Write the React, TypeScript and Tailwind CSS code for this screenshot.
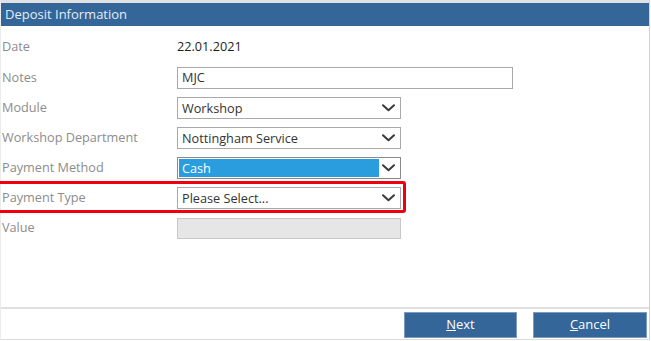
import React from "react";

const Chevron = () => (
  <svg width="13" height="8" viewBox="0 0 13 8" className="shrink-0">
    <path d="M1 1.2 L6.5 6.2 L12 1.2" fill="none" stroke="#3a3a3a" strokeWidth="2" strokeLinecap="round" strokeLinejoin="round" />
  </svg>
);

const Select = ({ value, focused }: { value: string; focused?: boolean }) => (
  <div
    className={`w-[224px] h-[22px] flex items-center bg-white border ${
      focused ? "border-[#8a8a8a]" : "border-[#a9a9a9]"
    }`}
  >
    {focused ? (
      <div className="flex-1 h-[18px] ml-[1px] bg-[#2a9ddf] text-white pl-[3px] flex items-center leading-none">
        {value}
      </div>
    ) : (
      <div className="flex-1 pl-[4px] text-[#333] leading-none">{value}</div>
    )}
    <div className="w-[21px] flex items-center justify-center pr-[2px]">
      <Chevron />
    </div>
  </div>
);

const Row = ({ label, h, children }: { label: string; h: string; children?: React.ReactNode }) => (
  <div className={`flex items-center ${h}`}>
    <div className="w-[176px] pl-[1px] text-[#8c8c8c]">{label}</div>
    {children}
  </div>
);

export default function App() {
  return (
    <div
      className="w-[651px] h-[341px] bg-white text-[12.7px]"
      style={{ fontFamily: "'Open Sans', 'Liberation Sans', sans-serif" }}
    >
      <div className="w-[650px] h-[340px] flex flex-col border-l border-r border-b border-l-[#ececec] border-r-[#d4d4d4] border-b-[#dcdcdc]">
        <div className="h-[3px] bg-[#e2e2e2] shrink-0" />
        <div className="h-[23px] bg-[#346699] shrink-0 flex items-center pl-[4px] text-[#e4ecf5] text-[13px]">
          Deposit Information
        </div>
        <div className="h-[281px] shrink-0 pt-[5px] relative">
          <Row label="Date" h="h-[31px]">
            <div className="text-[#1e1e1e]">22.01.2021</div>
          </Row>
          <Row label="Notes" h="h-[31px]">
            <div className="w-[336px] h-[22px] border border-[#a9a9a9] bg-white flex items-center pl-[4px] text-[#333]">
              MJC
            </div>
          </Row>
          <Row label="Module" h="h-[30px]">
            <Select value="Workshop" />
          </Row>
          <Row label="Workshop Department" h="h-[30px]">
            <Select value="Nottingham Service" />
          </Row>
          <Row label="Payment Method" h="h-[30px]">
            <Select value="Cash" focused />
          </Row>
          <Row label="Payment Type" h="h-[30px]">
            <Select value="Please Select..." />
          </Row>
          <Row label="Value" h="h-[30px]">
            <div className="w-[224px] h-[21px] border border-[#c8c8c8] bg-[#e6e6e6]" />
          </Row>
          <div className="absolute left-[-12px] top-[155px] w-[417px] h-[32px] border-[3px] border-[#f0000f] rounded-[3px] pointer-events-none" />
        </div>
        <div className="h-[2px] bg-[#e0e0e0] shrink-0" />
        <div className="flex-1 flex justify-end items-start pt-[3px] pr-[2px] gap-[16px]">
          <button className="w-[113px] h-[26px] bg-[#346699] border border-[#7d9cbd] text-white text-[13px] flex items-center justify-center">
            <span><span className="underline">N</span>ext</span>
          </button>
          <button className="w-[114px] h-[26px] bg-[#346699] border border-[#7d9cbd] text-white text-[13px] flex items-center justify-center">
            <span><span className="underline">C</span>ancel</span>
          </button>
        </div>
      </div>
    </div>
  );
}
